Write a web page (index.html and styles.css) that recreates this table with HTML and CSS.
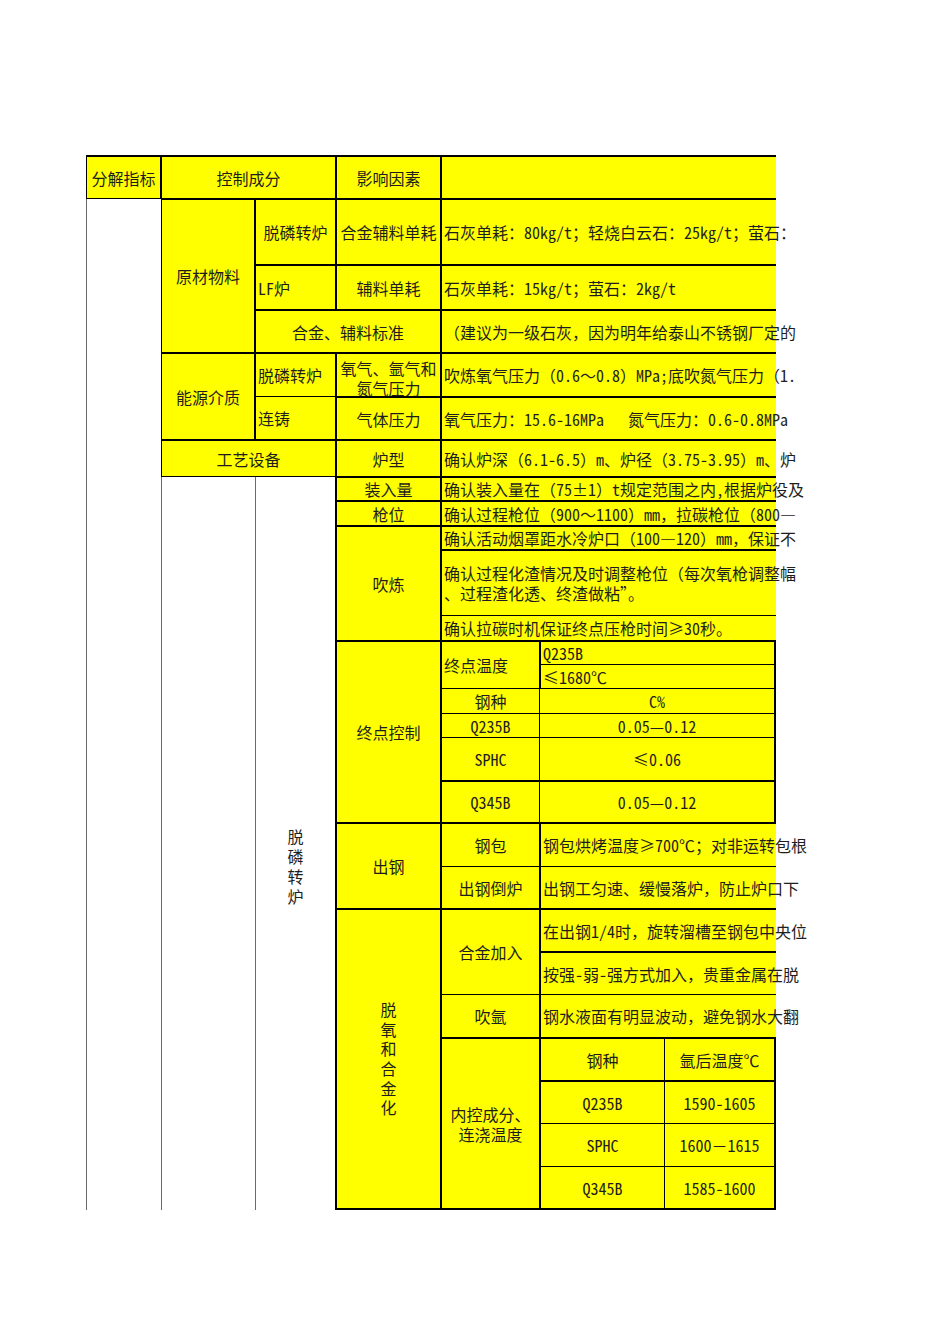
FILE: index.html
```html
<!DOCTYPE html>
<html lang="zh-CN">
<head>
<meta charset="utf-8">
<title>分解指标</title>
<link rel="stylesheet" href="styles.css">
</head>
<body>
<div class="sheet">
  <!-- row 1 -->
  <div class="y c top">分解指标</div>
  <div class="y c top cs2">控制成分</div>
  <div class="y c top">影响因素</div>
  <div class="y c top cs3 nr"></div>
  <!-- row 2 -->
  <div class="w rs26"></div>
  <div class="y c rs3">原材物料</div>
  <div class="y c">脱磷转炉</div>
  <div class="y c">合金辅料单耗</div>
  <div class="y l cs3 nr">石灰单耗：80kg/t；轻烧白云石：25kg/t；萤石：</div>
  <!-- row 3 -->
  <div class="y l">LF炉</div>
  <div class="y c">辅料单耗</div>
  <div class="y l cs3 nr">石灰单耗：15kg/t；萤石：2kg/t</div>
  <!-- row 4 -->
  <div class="y c cs2">合金、辅料标准</div>
  <div class="y l cs3 nr">（建议为一级石灰，因为明年给泰山不锈钢厂定的</div>
  <!-- row 5 -->
  <div class="y c rs2">能源介质</div>
  <div class="y l">脱磷转炉</div>
  <div class="y c clip"><span class="ml gas">氧气、氩气和<br>氮气压力</span></div>
  <div class="y l cs3 nr">吹炼氧气压力（0.6～0.8）MPa;底吹氮气压力（1.</div>
  <!-- row 6 -->
  <div class="y l nt">连铸</div>
  <div class="y c">气体压力</div>
  <div class="y l cs3 nr">氧气压力：15.6-16MPa&nbsp;&nbsp;&nbsp;氮气压力：0.6-0.8MPa</div>
  <!-- row 7 -->
  <div class="y c cs2">工艺设备</div>
  <div class="y c">炉型</div>
  <div class="y l cs3 nr">确认炉深（6.1-6.5）m、炉径（3.75-3.95）m、炉</div>
  <!-- row 8 -->
  <div class="w rs20"></div>
  <div class="w wv rs20"><span class="vtext">脱磷转炉</span></div>
  <div class="y c">装入量</div>
  <div class="y l cs3 nr">确认装入量在（75±1）t规定范围之内,根据炉役及</div>
  <!-- row 9 -->
  <div class="y c">枪位</div>
  <div class="y l cs3 nr">确认过程枪位（900～1100）mm，拉碳枪位（800—</div>
  <!-- row 10 -->
  <div class="y c rs3">吹炼</div>
  <div class="y l cs3 nr">确认活动烟罩距水冷炉口（100—120）mm，保证不</div>
  <!-- row 11 -->
  <div class="y l cs3 nr"><span class="ml">确认过程化渣情况及时调整枪位（每次氧枪调整幅<br>、过程渣化透、终渣做粘”。</span></div>
  <!-- row 12 -->
  <div class="y l cs3 nr nt">确认拉碳时机保证终点压枪时间≥30秒。</div>
  <!-- row 13 -->
  <div class="y c rs6">终点控制</div>
  <div class="y l rs2">终点温度</div>
  <div class="y l cs2 rb">Q235B</div>
  <!-- row 14 -->
  <div class="y l cs2 rb nt">≤1680℃</div>
  <!-- row 15 -->
  <div class="y c nt">钢种</div>
  <div class="y c cs2 rb nt nl">C%</div>
  <!-- row 16 -->
  <div class="y c nt">Q235B</div>
  <div class="y c cs2 rb nt nl">0.05—0.12</div>
  <!-- row 17 -->
  <div class="y c nt">SPHC</div>
  <div class="y c cs2 rb nt nl">≤0.06</div>
  <!-- row 18 -->
  <div class="y c">Q345B</div>
  <div class="y c cs2 rb nl">0.05—0.12</div>
  <!-- row 19 -->
  <div class="y c rs2">出钢</div>
  <div class="y c">钢包</div>
  <div class="y l cs2 nr">钢包烘烤温度≥700℃；对非运转包根</div>
  <!-- row 20 -->
  <div class="y c nt">出钢倒炉</div>
  <div class="y l cs2 nr nt">出钢工匀速、缓慢落炉，防止炉口下</div>
  <!-- row 21 -->
  <div class="y c rs7 bb"><span class="vtext vt2">脱氧和合金化</span></div>
  <div class="y c rs2">合金加入</div>
  <div class="y l cs2 nr">在出钢1/4时，旋转溜槽至钢包中央位</div>
  <!-- row 22 -->
  <div class="y l cs2 nr">按强-弱-强方式加入，贵重金属在脱</div>
  <!-- row 23 -->
  <div class="y c nt">吹氩</div>
  <div class="y l cs2 nr nt">钢水液面有明显波动，避免钢水大翻</div>
  <!-- row 24 -->
  <div class="y c rs4 bb"><span class="ml ctr">内控成分、<br>连浇温度</span></div>
  <div class="y c">钢种</div>
  <div class="y c rb nl">氩后温度℃</div>
  <!-- row 25 -->
  <div class="y c">Q235B</div>
  <div class="y c rb nl">1590-1605</div>
  <!-- row 26 -->
  <div class="y c nt">SPHC</div>
  <div class="y c rb nt nl">1600－1615</div>
  <!-- row 27 -->
  <div class="y c nt bb">Q345B</div>
  <div class="y c rb nt nl bb">1585-1600</div>
</div>
</body>
</html>
```

FILE: styles.css
```css
html, body {
  margin: 0;
  padding: 0;
  background: #fff;
}

body {
  font-family: "Noto Sans Mono CJK SC", "Liberation Serif", "Noto Sans CJK SC", serif;
  font-size: 16px;
  color: #1e1e1e;
}

.sheet {
  display: grid;
  grid-template-columns: 75px 94px 81px 105px 99px 125px 111px;
  grid-template-rows:
    44px 66px 45px 43px 44px 43px 37px
    24px 25px 24px 66px 25px
    24px 24px 25px 24px 43px 42px
    44px 42px 43px 43px 43px
    43px 43px 43px 43px;
  width: 690px;
  margin: 155px 0 0 86px;
}

.sheet > div {
  box-sizing: border-box;
  min-width: 0;
  min-height: 0;
  line-height: 20px;
  white-space: nowrap;
}

.y {
  background: #ffff00;
  border: 1px solid #000;
}

.w {
  background: #fff;
  border-left: 1px solid #6a6a6a;
}

.c,
.l {
  display: flex;
  align-items: center;
}

.c {
  justify-content: center;
}

.l {
  justify-content: flex-start;
  padding-left: 2px;
}

.cs2 { grid-column: span 2; }
.cs3 { grid-column: span 3; }
.rs2 { grid-row: span 2; }
.rs3 { grid-row: span 3; }
.rs4 { grid-row: span 4; }
.rs6 { grid-row: span 6; }
.rs7 { grid-row: span 7; }
.rs20 { grid-row: span 20; }
.rs26 { grid-row: span 26; }

.top { border-top-width: 2px; }
.nr { border-right: 0; }
.nt { border-top: 0; }
.nl { border-left: 0; }
.rb { border-right-width: 2px; }
.bb { border-bottom-width: 2px; }

.sheet > .clip {
  overflow: hidden;
  padding-top: 6px;
}

.ml {
  display: block;
  white-space: nowrap;
}

.gas {
  line-height: 20px;
  text-align: center;
}

.ctr {
  text-align: center;
}

.wv {
  display: flex;
  justify-content: center;
  align-items: center;
  padding-top: 45px;
  border-right: 1px solid #000;
}

.vtext {
  display: block;
  width: 1em;
  white-space: normal;
  line-height: 20px;
  text-align: center;
}

.vt2 {
  line-height: 19.6px;
}
```
